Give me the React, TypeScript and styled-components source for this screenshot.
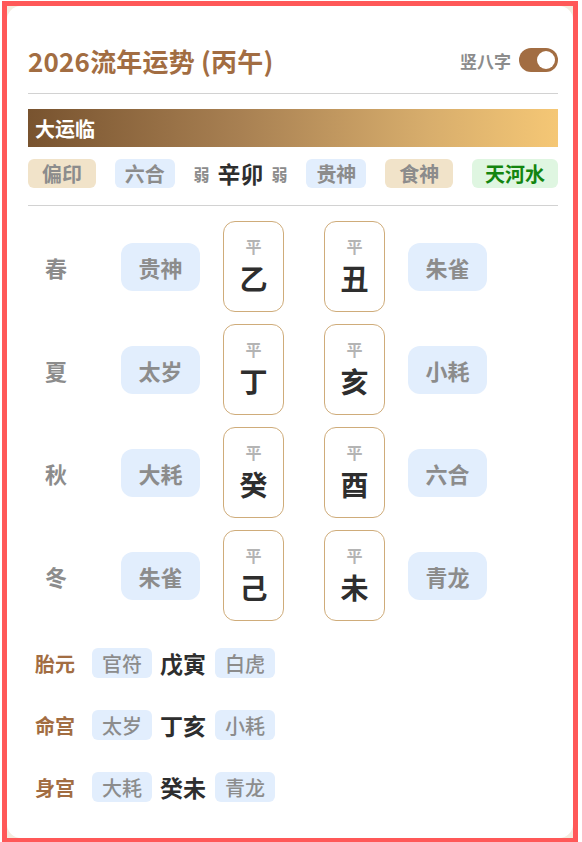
import React, { FC } from 'react';
import styled, { createGlobalStyle, css } from 'styled-components';

const Colors = {
    brown: '#a26d42',
    frame: '#ff5858',
    beige: '#f3ece0',
    white: '#ffffff',
    line: '#d2d2d2',
    gray: '#8c8c8c',
    lightGray: '#b4b4b4',
    ink: '#2e2e2e',
    blueBg: '#e2eefd',
    beigeBg: '#f1e3c9',
    greenBg: '#dff6e1',
    green: '#13850f',
    boxBorder: '#cfac7a',
};

const GlobalStyle = createGlobalStyle`
    html, body {
        margin: 0;
        padding: 0;
        background: ${Colors.white};
    }
    body {
        font-family: 'Noto Sans CJK SC', 'Noto Sans', sans-serif;
    }
`;

const Frame = styled.div`
    box-sizing: border-box;
    margin: 1px 0 0 2px;
    width: 576px;
    height: 842px;
    border: 5px solid ${Colors.frame};
    background: ${Colors.beige};
`;

const Card = styled.div`
    box-sizing: border-box;
    height: 100%;
    background: ${Colors.white};
    border-radius: 14px;
    padding: 32px 15px 0 21px;
`;

const Header = styled.header`
    display: flex;
    align-items: center;
    justify-content: space-between;
    height: 44px;
    padding-bottom: 11px;
    border-bottom: 1px solid ${Colors.line};
`;

const Title = styled.h1`
    margin: 0;
    font-size: 26px;
    font-weight: 700;
    color: ${Colors.brown};
    letter-spacing: 0.2px;
`;

const ToggleWrap = styled.div`
    display: flex;
    align-items: center;
    gap: 8px;
    color: ${Colors.gray};
    font-size: 17px;
    font-weight: 700;
`;

const Switch = styled.div<{ on: boolean }>`
    position: relative;
    width: 39px;
    height: 24px;
    border-radius: 12px;
    background: ${(p) => (p.on ? Colors.brown : '#ccc')};
    &:after {
        content: '';
        position: absolute;
        top: 3px;
        left: ${(p) => (p.on ? '18px' : '3px')};
        width: 18px;
        height: 18px;
        border-radius: 50%;
        background: ${Colors.white};
    }
`;

const Banner = styled.div`
    display: flex;
    align-items: center;
    margin-top: 15px;
    height: 38px;
    padding-left: 7px;
    background: linear-gradient(90deg, #78532f 0%, #a88052 40%, #d7ad6c 75%, #f5c775 100%);
    color: ${Colors.white};
    font-size: 20px;
    font-weight: 700;
`;

const TagRow = styled.div`
    display: flex;
    align-items: center;
    justify-content: space-between;
    height: 29px;
    margin-top: 12px;
    padding-bottom: 17px;
    border-bottom: 1px solid ${Colors.line};
    line-height: 1;
`;

type TagKind = 'blue' | 'beige' | 'green';

const tagKinds = {
    blue: css`
        background: ${Colors.blueBg};
        color: ${Colors.gray};
        padding: 0 10px;
    `,
    beige: css`
        background: ${Colors.beigeBg};
        color: ${Colors.gray};
        padding: 0 14px;
    `,
    green: css`
        background: ${Colors.greenBg};
        color: ${Colors.green};
        padding: 0 13px;
    `,
};

const Tag = styled.span<{ kind: TagKind }>`
    display: inline-flex;
    align-items: center;
    height: 29px;
    border-radius: 6px;
    font-size: 20px;
    font-weight: 700;
    ${(p) => tagKinds[p.kind]}
`;

const Pillar = styled.span`
    display: flex;
    align-items: center;
    gap: 8px;
`;

const Weak = styled.span`
    font-size: 16px;
    font-weight: 700;
    color: ${Colors.gray};
`;

const Stem = styled.span<{ size?: number }>`
    font-size: ${(p) => p.size || 23}px;
    font-weight: 700;
    line-height: 1;
    color: ${Colors.ink};
`;

const SeasonList = styled.div`
    display: flex;
    flex-direction: column;
    gap: 12px;
    margin-top: 15px;
`;

const SeasonRow = styled.div`
    display: grid;
    grid-template-columns: 70px 79px 162px 79px;
    column-gap: 23px;
    align-items: center;
`;

const Season = styled.span`
    padding-left: 17px;
    font-size: 22px;
    font-weight: 700;
    color: ${Colors.gray};
`;

const God = styled.span`
    display: flex;
    align-items: center;
    justify-content: center;
    height: 48px;
    border-radius: 12px;
    background: ${Colors.blueBg};
    color: ${Colors.gray};
    font-size: 22px;
    font-weight: 700;
`;

const Pair = styled.div`
    display: flex;
    justify-content: space-between;
`;

const CharBox = styled.div`
    box-sizing: border-box;
    display: flex;
    flex-direction: column;
    align-items: center;
    width: 61px;
    height: 91px;
    padding-top: 12px;
    border: 1px solid ${Colors.boxBorder};
    border-radius: 12px;
`;

const Level = styled.span`
    font-size: 16px;
    font-weight: 700;
    line-height: 24px;
    color: ${Colors.lightGray};
`;

const BigChar = styled.span`
    margin-top: 3px;
    font-size: 28px;
    font-weight: 700;
    line-height: 34px;
    color: ${Colors.ink};
`;

const PalaceList = styled.div`
    display: flex;
    flex-direction: column;
    gap: 32px;
    margin-top: 27px;
`;

const PalaceRow = styled.div`
    display: flex;
    align-items: center;
    height: 30px;
    padding-left: 7px;
`;

const PalaceLabel = styled.span`
    width: 57px;
    font-size: 20px;
    font-weight: 700;
    color: ${Colors.brown};
`;

const SmallPill = styled.span`
    display: inline-flex;
    align-items: center;
    height: 30px;
    padding: 0 10px;
    border-radius: 6px;
    background: ${Colors.blueBg};
    color: ${Colors.gray};
    font-size: 20px;
    font-weight: 500;
`;

const PalaceStem = styled(Stem)`
    margin: 0 9px 0 8px;
`;

const seasons = [
    { name: '春', left: '贵神', stem: '乙', branch: '丑', right: '朱雀' },
    { name: '夏', left: '太岁', stem: '丁', branch: '亥', right: '小耗' },
    { name: '秋', left: '大耗', stem: '癸', branch: '酉', right: '六合' },
    { name: '冬', left: '朱雀', stem: '己', branch: '未', right: '青龙' },
];

const palaces = [
    { name: '胎元', left: '官符', pillar: '戊寅', right: '白虎' },
    { name: '命宫', left: '太岁', pillar: '丁亥', right: '小耗' },
    { name: '身宫', left: '大耗', pillar: '癸未', right: '青龙' },
];

const App: FC = () => {
    return (
        <>
            <GlobalStyle />
            <Frame>
                <Card>
                    <Header>
                        <Title>2026流年运势 (丙午)</Title>
                        <ToggleWrap>
                            竖八字
                            <Switch on />
                        </ToggleWrap>
                    </Header>

                    <Banner>大运临</Banner>

                    <TagRow>
                        <Tag kind="beige">偏印</Tag>
                        <Tag kind="blue">六合</Tag>
                        <Pillar>
                            <Weak>弱</Weak>
                            <Stem>辛卯</Stem>
                            <Weak>弱</Weak>
                        </Pillar>
                        <Tag kind="blue">贵神</Tag>
                        <Tag kind="beige">食神</Tag>
                        <Tag kind="green">天河水</Tag>
                    </TagRow>

                    <SeasonList>
                        {seasons.map((s) => (
                            <SeasonRow key={s.name}>
                                <Season>{s.name}</Season>
                                <God>{s.left}</God>
                                <Pair>
                                    <CharBox>
                                        <Level>平</Level>
                                        <BigChar>{s.stem}</BigChar>
                                    </CharBox>
                                    <CharBox>
                                        <Level>平</Level>
                                        <BigChar>{s.branch}</BigChar>
                                    </CharBox>
                                </Pair>
                                <God>{s.right}</God>
                            </SeasonRow>
                        ))}
                    </SeasonList>

                    <PalaceList>
                        {palaces.map((p) => (
                            <PalaceRow key={p.name}>
                                <PalaceLabel>{p.name}</PalaceLabel>
                                <SmallPill>{p.left}</SmallPill>
                                <PalaceStem>{p.pillar}</PalaceStem>
                                <SmallPill>{p.right}</SmallPill>
                            </PalaceRow>
                        ))}
                    </PalaceList>
                </Card>
            </Frame>
        </>
    );
};

export default App;
